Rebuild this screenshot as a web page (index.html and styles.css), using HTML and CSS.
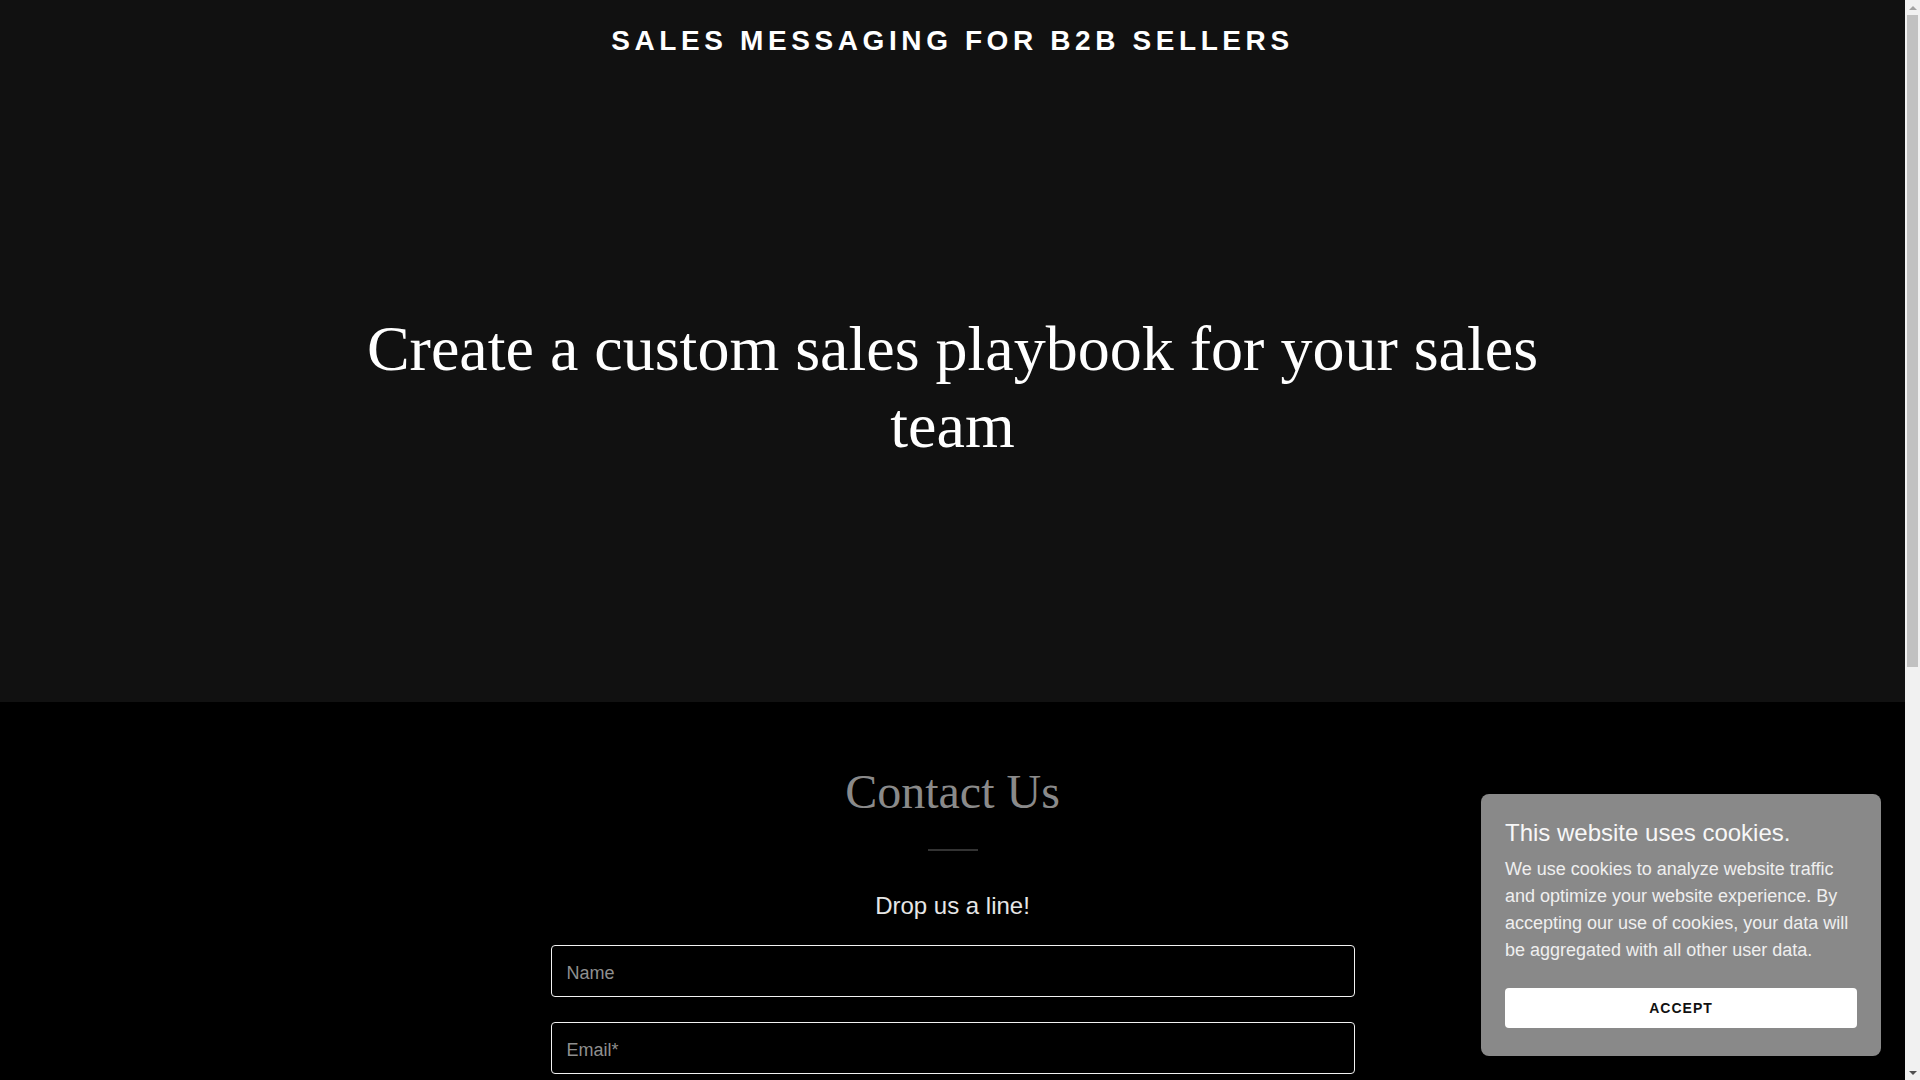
FILE: index.html
```html
<!DOCTYPE html>
<html lang="en">
<head>
<meta charset="utf-8">
<title>Sales Messaging for B2B Sellers</title>
<link rel="stylesheet" href="styles.css">
</head>
<body>
<section class="hero">
  <header class="site-header">
    <h1 class="site-title">SALES MESSAGING FOR B2B SELLERS</h1>
  </header>
  <div class="hero-body">
    <h2 class="hero-heading">Create a custom sales playbook for your sales team</h2>
  </div>
</section>

<section class="contact">
  <h2 class="contact-title">Contact Us</h2>
  <hr class="divider">
  <h4 class="contact-sub">Drop us a line!</h4>
  <form class="contact-form">
    <input class="field" type="text" placeholder="Name">
    <input class="field" type="email" placeholder="Email*">
    <textarea class="field field-area" placeholder="Message"></textarea>
    <button class="send" type="button">SEND</button>
  </form>
</section>

<footer class="footer">
  <p class="footer-text">Copyright © 2023 Sales Messaging for B2B Sellers - All Rights Reserved.</p>
  <p class="footer-text">Powered by GoDaddy</p>
</footer>

<div class="cookie">
  <h3 class="cookie-title">This website uses cookies.</h3>
  <p class="cookie-text">We use cookies to analyze website traffic and optimize your website experience. By accepting our use of cookies, your data will be aggregated with all other user data.</p>
  <button class="cookie-btn" type="button">ACCEPT</button>
</div>

<div class="scrollbar" aria-hidden="true">
  <div class="sb-btn"><span class="sb-up"></span></div>
  <div class="sb-thumb"></div>
  <div class="sb-space"></div>
  <div class="sb-btn"><span class="sb-down"></span></div>
</div>
</body>
</html>
```

FILE: styles.css
```css
html, body {
  margin: 0;
  padding: 0;
}
html {
  scrollbar-width: none;
}
body {
  background: #000;
  color: #fff;
  font-family: "Liberation Sans", Arial, sans-serif;
  padding-right: 15px;
}

.hero {
  background: #111111;
  height: 702px;
  display: flex;
  flex-direction: column;
}
.site-header {
  padding-top: 23px;
  text-align: center;
}
.site-title {
  margin: 0;
  font-family: "Liberation Sans", Arial, sans-serif;
  font-weight: 700;
  font-size: 28px;
  line-height: 35px;
  letter-spacing: 4.6px;
  color: #fff;
}
.hero-body {
  padding-top: 253px;
  display: flex;
  justify-content: center;
}
.hero-heading {
  margin: 0;
  max-width: 1232px;
  font-family: "Liberation Serif", "Times New Roman", serif;
  font-weight: 400;
  font-size: 64px;
  line-height: 76.8px;
  text-align: center;
  color: #fff;
}

.contact {
  padding: 61px 0 56px;
  display: flex;
  flex-direction: column;
  align-items: center;
}
.contact-title {
  margin: 0;
  font-family: "Liberation Serif", "Times New Roman", serif;
  font-weight: 400;
  font-size: 48px;
  line-height: 57.6px;
  color: #8a8a8a;
}
.divider {
  width: 50px;
  height: 2px;
  margin: 28px 0 0;
  border: 0;
  background: #333;
}
.contact-sub {
  margin: 40px 0 0;
  font-weight: 400;
  font-size: 24px;
  line-height: 30px;
  color: #e6e6e6;
}
.contact-form {
  margin-top: 24px;
  width: 804px;
  display: flex;
  flex-direction: column;
  gap: 25px;
}
.field {
  box-sizing: border-box;
  width: 100%;
  height: 52px;
  margin: 0;
  padding: 5px 15px 0;
  background: #000;
  border: 1px solid #f2f2f2;
  border-radius: 4px;
  color: #fff;
  font-family: "Liberation Sans", Arial, sans-serif;
  font-size: 18px;
  outline: none;
}
.field::placeholder {
  color: #8f8f8f;
}
.field-area {
  height: 150px;
  padding-top: 14px;
  resize: none;
}
.send {
  height: 56px;
  border: 0;
  border-radius: 4px;
  background: #fff;
  color: #000;
  font-family: "Liberation Sans", Arial, sans-serif;
  font-weight: 700;
  font-size: 14px;
  letter-spacing: 1px;
}

.footer {
  padding: 56px 0 64px;
  text-align: center;
}
.footer-text {
  margin: 0 0 16px;
  font-size: 14px;
  line-height: 21px;
  color: #aaa;
}

.cookie {
  position: fixed;
  right: 39px;
  bottom: 24px;
  width: 400px;
  box-sizing: border-box;
  padding: 24px 24px 28px;
  background: #898989;
  border-radius: 8px;
}
.cookie-title {
  margin: 0;
  font-weight: 400;
  font-size: 24px;
  line-height: 30px;
  color: #f7f7f7;
}
.cookie-text {
  margin: 8px 0 0;
  font-size: 18px;
  line-height: 27px;
  color: #efefef;
}
.cookie-btn {
  display: block;
  width: 100%;
  height: 40px;
  margin-top: 24px;
  border: 0;
  border-radius: 4px;
  background: #fff;
  color: #111;
  font-family: "Liberation Sans", Arial, sans-serif;
  font-weight: 700;
  font-size: 14px;
  letter-spacing: 1px;
}

/* scrollbar drawn over the right edge of the window */
.scrollbar {
  position: fixed;
  top: 0;
  right: 0;
  width: 15px;
  height: 100vh;
  background: #f1f1f1;
  display: flex;
  flex-direction: column;
}
.sb-btn {
  height: 15px;
  display: flex;
  align-items: center;
  justify-content: center;
}
.sb-up {
  width: 0;
  height: 0;
  border-left: 4px solid transparent;
  border-right: 4px solid transparent;
  border-bottom: 4px solid #a3a3a3;
}
.sb-down {
  width: 0;
  height: 0;
  border-left: 4px solid transparent;
  border-right: 4px solid transparent;
  border-top: 4px solid #505050;
}
.sb-thumb {
  height: 652px;
  margin: 0 2px;
  background: #c1c1c1;
}
.sb-space {
  flex: 1;
}
```
